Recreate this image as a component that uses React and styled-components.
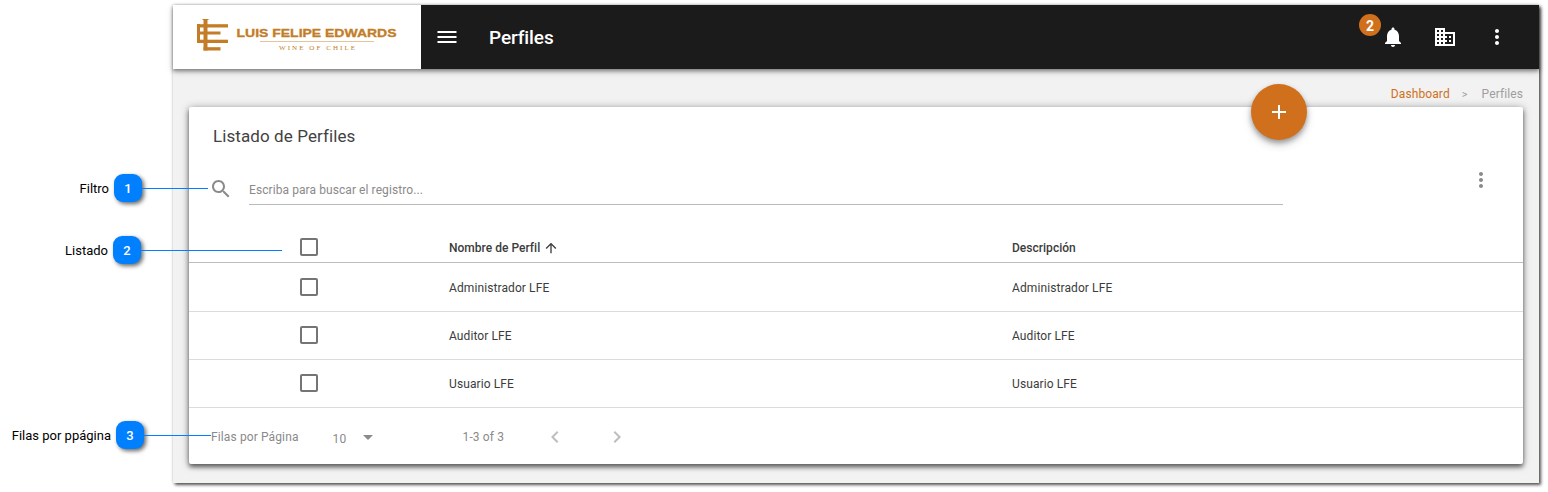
import React from "react";
import styled, { createGlobalStyle } from "styled-components";

const Global = createGlobalStyle`
  *, *::before, *::after { box-sizing: border-box; }
  body { margin: 0; background: #fff; font-family: Roboto, "Liberation Sans", sans-serif; }
`;

const Page = styled.main`
  position: relative;
  height: 492px;
  padding: 5px 9px 8px 173px;
  overflow: hidden;
`;

const Window = styled.div`
  height: 478px;
  background: #f2f2f2;
  box-shadow: 2px 2px 3px rgba(0, 0, 0, 0.65), 0 0 3px rgba(0, 0, 0, 0.2);
`;

const TopBar = styled.header`
  position: relative;
  display: flex;
  align-items: center;
  height: 64px;
  background: #1b1b1b;
  color: #fff;
  box-shadow: 0 2px 4px rgba(0, 0, 0, 0.45), 0 3px 8px rgba(0, 0, 0, 0.12);
`;

const Brand = styled.div`
  width: 248px;
  height: 64px;
  background: #fff;
`;

const Icon = styled.svg`
  display: block;
  flex: none;
  width: ${(p) => p.$size || 24}px;
  height: ${(p) => p.$size || 24}px;
  fill: currentColor;
`;

const MenuButton = styled.div`
  margin-left: 14px;
`;

const PageTitle = styled.h1`
  margin: 1px 0 0 30px;
  font-size: 19px;
  line-height: 24px;
  font-weight: 500;
  letter-spacing: -0.1px;
`;

const Actions = styled.div`
  display: flex;
  gap: 28px;
  margin-left: auto;
  padding-right: 30px;
`;

const BellWrap = styled.div`
  position: relative;
`;

const Badge = styled.span`
  position: absolute;
  left: -22px;
  top: -11px;
  width: 22px;
  height: 22px;
  border-radius: 50%;
  background: #d0701c;
  font-size: 14px;
  line-height: 24px;
  font-weight: 700;
  text-align: center;
`;

const Crumbs = styled.nav`
  display: flex;
  justify-content: flex-end;
  align-items: center;
  height: 38px;
  padding: 12px 16px 0 0;
  font-size: 12px;
  line-height: 16px;
  letter-spacing: 0.1px;
  color: #9e9e9e;
`;

const CrumbLink = styled.span`
  color: #d0701c;
`;

const CrumbMark = styled.span`
  margin: 1px 14px 0 12px;
  font-size: 11px;
`;

const Card = styled.section`
  position: relative;
  height: 357px;
  margin: 0 16px;
  border-radius: 2px;
  background: #fff;
  box-shadow: 0 3px 4px rgba(0, 0, 0, 0.5), 0 1px 8px rgba(0, 0, 0, 0.35);
`;

const AddButton = styled.div`
  position: absolute;
  top: -23px;
  right: 216px;
  display: grid;
  place-items: center;
  width: 56px;
  height: 56px;
  border-radius: 50%;
  background: #d0701c;
  color: #fff;
  box-shadow: 0 3px 5px rgba(0, 0, 0, 0.3), 0 5px 10px rgba(0, 0, 0, 0.16);
`;

const CardTitle = styled.h2`
  margin: 0;
  padding: 17px 24px 0;
  height: 61px;
  font-size: 17px;
  line-height: 24px;
  font-weight: 400;
  letter-spacing: 0.09px;
  color: #424242;
`;

const SearchRow = styled.div`
  display: flex;
  align-items: flex-start;
  height: 64px;
  padding-left: 20px;
  color: #8a8a8a;
`;

const SearchIcon = styled.div`
  margin-top: 9px;
`;

const SearchField = styled.div`
  width: 1034px;
  height: 37px;
  margin-left: 16px;
  padding-top: 14px;
  border-bottom: 1px solid #b9b9b9;
  font-size: 12px;
  line-height: 16px;
  letter-spacing: 0.08px;
`;

const RowMenu = styled.div`
  margin-left: 186px;
`;

const Row = styled.div`
  display: grid;
  grid-template-columns: 260px 563px 1fr;
  align-items: start;
  height: ${(p) => p.$height}px;
  padding-top: ${(p) => p.$top}px;
  border-bottom: 1px solid ${(p) => (p.$head ? "#bdbdbd" : "#dcdcdc")};
  font-size: 12px;
  line-height: 16px;
  font-weight: ${(p) => (p.$head ? 500 : 400)};
  letter-spacing: ${(p) => (p.$head ? 0.02 : 0.1)}px;
  color: #3c3c3c;
`;

const Check = styled.span`
  width: 18px;
  height: 18px;
  margin-left: 111px;
  border: 2px solid #757575;
  border-radius: 2px;
`;

const Cell = styled.span`
  display: flex;
  align-items: center;
  gap: 3px;
  height: 16px;
  margin-top: 2px;
`;

const Footer = styled.footer`
  display: flex;
  align-items: center;
  height: 56px;
  padding: 1px 0 0 22px;
  font-size: 12px;
  letter-spacing: 0.12px;
  color: #8a8a8a;
`;

const PageSize = styled.span`
  display: flex;
  align-items: center;
  margin-left: 34px;
`;

const SizeValue = styled.span`
  width: 23px;
  padding-top: 4px;
`;

const Range = styled.span`
  width: 80px;
  margin-left: 83px;
`;

const Pager = styled.span`
  display: flex;
  gap: 38px;
  color: #bdbdbd;
`;

const Callout = styled.div`
  position: absolute;
  left: 0;
  top: ${(p) => p.$y}px;
  display: flex;
  align-items: center;
  height: 28px;
  width: ${(p) => p.$end}px;
`;

const CalloutLabel = styled.span`
  width: ${(p) => p.$width}px;
  padding-top: 1px;
  font-size: 13px;
  line-height: 16px;
  color: #000;
  text-align: right;
  white-space: nowrap;
`;

const CalloutNumber = styled.span`
  width: 28px;
  height: 28px;
  margin-left: 5px;
  border-radius: 9px;
  background: #0080ff;
  box-shadow: 2px 2px 4px rgba(0, 0, 0, 0.6);
  color: #fff;
  font-size: 13px;
  line-height: 29px;
  font-weight: 500;
  text-align: center;
`;

const CalloutLine = styled.span`
  flex: 1;
  height: 1px;
  margin-top: 1px;
  background: #0080ff;
`;

const paths = {
  menu: "M2.500 18h19v-2h-19v2zm0-5h19v-2h-19v2zm0-7v2h19V6h-19z",
  bell: "M12 22c1.1 0 2-.9 2-2h-4c0 1.1.89 2 2 2zm6-6v-5c0-3.07-1.64-5.64-4.5-6.32V4c0-.83-.67-1.5-1.5-1.5s-1.5.67-1.5 1.5v.68C7.63 5.36 6 7.92 6 11v5l-2 2v1h16v-1l-2-2z",
  building: "M12 7V3H2v18h20V7H12zM6 19H4v-2h2v2zm0-4H4v-2h2v2zm0-4H4V9h2v2zm0-4H4V5h2v2zm4 12H8v-2h2v2zm0-4H8v-2h2v2zm0-4H8V9h2v2zm0-4H8V5h2v2zm10 12h-8v-2h2v-2h-2v-2h2v-2h-2V9h8v10zm-2-8h-2v2h2v-2zm0 4h-2v2h2v-2z",
  more: "M12 8c1.1 0 2-.9 2-2s-.9-2-2-2-2 .9-2 2 .9 2 2 2zm0 2c-1.1 0-2 .9-2 2s.9 2 2 2 2-.9 2-2-.9-2-2-2zm0 6c-1.1 0-2 .9-2 2s.9 2 2 2 2-.9 2-2-.9-2-2-2z",
  add: "M19 13h-6v6h-2v-6H5v-2h6V5h2v6h6v2z",
  search: "M15.5 14h-.79l-.28-.27C15.41 12.59 16 11.11 16 9.5 16 5.91 13.09 3 9.5 3S3 5.91 3 9.5 5.91 16 9.5 16c1.61 0 3.09-.59 4.23-1.57l.27.28v.79l5 4.99L20.49 19l-4.99-5zm-6 0C7.01 14 5 11.99 5 9.5S7.01 5 9.5 5 14 7.01 14 9.5 11.99 14 9.5 14z",
  arrowUp: "M4 12l1.41 1.41L11 7.83V20h2V7.83l5.58 5.59L20 12l-8-8-8 8z",
  dropdown: "M7 10l5 5 5-5z",
  prev: "M15.41 7.41L14 6l-6 6 6 6 1.41-1.41L10.83 12z",
  next: "M10 6L8.59 7.41 13.17 12l-4.58 4.59L10 18l6-6z",
};

const Glyph = ({ name, size }) => (
  <Icon $size={size} viewBox="0 0 24 24"><path d={paths[name]} /></Icon>
);

const Logo = () => (
  <svg width="248" height="64" viewBox="0 0 248 64" fill="#c27d26">
    <rect x="24" y="19" width="3" height="19" />
    <rect x="30.500" y="14" width="4" height="31.500" />
    <rect x="29.500" y="14" width="6" height="1" />
    <rect x="24" y="19.200" width="31" height="3.300" />
    <rect x="24" y="26.500" width="23.500" height="3" />
    <rect x="24" y="34.700" width="31" height="3.300" />
    <rect x="30.500" y="42.200" width="17" height="3.300" />
    <text x="63.500" y="32" fontFamily="Liberation Sans, sans-serif" fontWeight="700" fontSize="11.500" stroke="#c27d26" strokeWidth="0.300" textLength="160" lengthAdjust="spacingAndGlyphs">LUIS FELIPE EDWARDS</text>
    <rect x="87" y="36" width="114" height="1" opacity=".45" />
    <text x="106" y="45" fontFamily="Liberation Serif, serif" fontWeight="400" fontSize="7" textLength="76">WINE OF CHILE</text>
  </svg>
);

const rows = ["Administrador LFE", "Auditor LFE", "Usuario LFE"];

const callouts = [
  { n: 1, label: "Filtro", y: 174, width: 109, end: 208 },
  { n: 2, label: "Listado", y: 236, width: 108, end: 282 },
  { n: 3, label: "Filas por ppágina", y: 421, width: 111, end: 211 },
];

export default function App() {
  return (
    <Page>
      <Global />
      <Window>
        <TopBar>
          <Brand><Logo /></Brand>
          <MenuButton><Glyph name="menu" /></MenuButton>
          <PageTitle>Perfiles</PageTitle>
          <Actions>
            <BellWrap><Glyph name="bell" /><Badge>2</Badge></BellWrap>
            <Glyph name="building" />
            <Glyph name="more" />
          </Actions>
        </TopBar>
        <Crumbs>
          <CrumbLink>Dashboard</CrumbLink>
          <CrumbMark>&gt;</CrumbMark>
          <span>Perfiles</span>
        </Crumbs>
        <Card>
          <AddButton><Glyph name="add" /></AddButton>
          <CardTitle>Listado de Perfiles</CardTitle>
          <SearchRow>
            <SearchIcon><Glyph name="search" /></SearchIcon>
            <SearchField>Escriba para buscar el registro...</SearchField>
            <RowMenu><Glyph name="more" /></RowMenu>
          </SearchRow>
          <Row $head $height={31} $top={6}>
            <Check />
            <Cell>Nombre de Perfil <Glyph name="arrowUp" size={16} /></Cell>
            <Cell>Descripción</Cell>
          </Row>
          {rows.map((name, i) => (
            <Row key={name} $height={i === 0 ? 49 : 48} $top={i === 0 ? 15 : 14}>
              <Check />
              <Cell>{name}</Cell>
              <Cell>{name}</Cell>
            </Row>
          ))}
          <Footer>
            <span>Filas por Página</span>
            <PageSize><SizeValue>10</SizeValue><Glyph name="dropdown" /></PageSize>
            <Range>1-3 of 3</Range>
            <Pager><Glyph name="prev" /><Glyph name="next" /></Pager>
          </Footer>
        </Card>
      </Window>
      {callouts.map((c) => (
        <Callout key={c.n} $y={c.y} $end={c.end}>
          <CalloutLabel $width={c.width}>{c.label}</CalloutLabel>
          <CalloutNumber>{c.n}</CalloutNumber>
          <CalloutLine />
        </Callout>
      ))}
    </Page>
  );
}
